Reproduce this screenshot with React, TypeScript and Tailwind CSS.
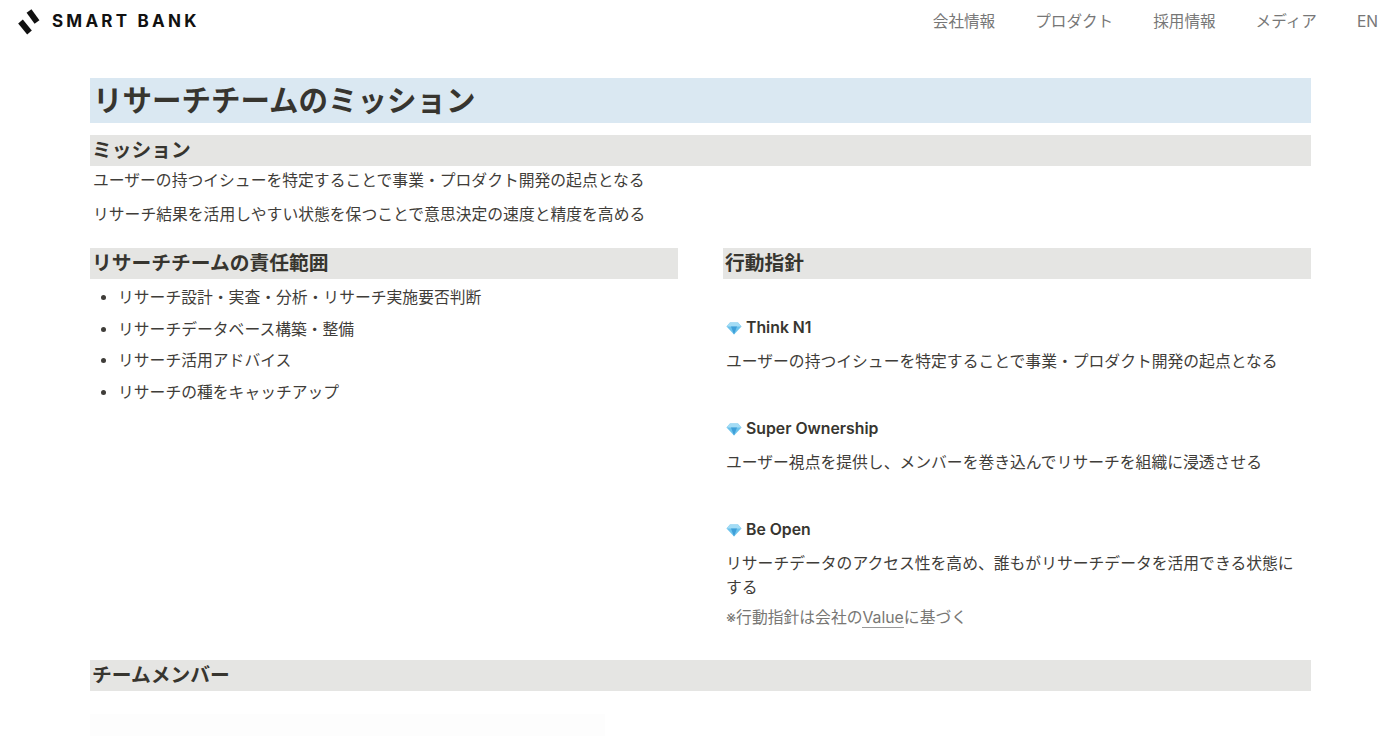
import React from 'react';

const jp = { fontFamily: '"Inter", "Noto Sans CJK JP", sans-serif' };

const Gem = () => (
  <svg width="16" height="13" viewBox="0 0 16 13" className="shrink-0">
    <path d="M0.5 4.5 L4 0.5 H12 L15.5 4.5 L8 12.5 Z" fill="#6cc3ec" />
    <path d="M4 0.5 H12 L15.5 4.5 H0.5 Z" fill="#a3dcf5" />
    <path d="M5 4.5 L8 12.5 L11 4.5 Z" fill="#3f9fd8" />
  </svg>
);

const Logo = () => (
  <svg width="22" height="26" viewBox="0 0 22 26">
    <path d="M2.5 12.5 L11.5 23.5" stroke="#111" strokeWidth="6" fill="none" />
    <path d="M11 2 L19 13" stroke="#111" strokeWidth="6" fill="none" />
  </svg>
);

const Heading = ({ children }: { children: React.ReactNode }) => (
  <div className="h-[31px] bg-[#e5e5e3] pl-[2px] flex items-center text-[19.75px] font-bold text-[#37352f]">{children}</div>
);

const Value = ({ title, children }: { title: string; children: React.ReactNode }) => (
  <div>
    <div className="flex items-center gap-1 h-6 pl-[3px] text-[15.8px] font-semibold text-[#37352f]"><Gem />{title}</div>
    <p className="mt-[10px] pl-[3px] pr-[4px] text-[15.8px] leading-6 text-[#3f3d39]">{children}</p>
  </div>
);

export default function App() {
  return (
    <div className="h-[736px] overflow-hidden bg-white" style={jp}>
      <header className="h-[44px] flex items-center justify-between pl-[18px] pr-[22px]">
        <div className="flex items-center gap-[12px]">
          <Logo />
          <span className="text-[17px] font-bold tracking-[0.19em] text-[#111]">SMART BANK</span>
        </div>
        <nav className="flex items-center gap-[40px] text-[15.6px] text-[#777]">
          <span>会社情報</span><span>プロダクト</span><span>採用情報</span><span>メディア</span><span>EN</span>
        </nav>
      </header>
      <main className="pl-[90px] pr-[89px] pt-[34px] text-[#3f3d39]">
        <h1 className="h-[45px] bg-[#dae8f2] pl-[3px] flex items-center text-[29.5px] font-bold text-[#37352f]">リサーチチームのミッション</h1>
        <div className="mt-3"><Heading>ミッション</Heading></div>
        <p className="pl-[3px] mt-[3px] text-[15.8px] leading-6">ユーザーの持つイシューを特定することで事業・プロダクト開発の起点となる</p>
        <p className="pl-[3px] mt-[10px] text-[15.8px] leading-6">リサーチ結果を活用しやすい状態を保つことで意思決定の速度と精度を高める</p>
        <div className="mt-[21px] grid grid-cols-2 gap-[45px]">
          <section>
            <Heading>リサーチチームの責任範囲</Heading>
            <ul className="mt-[7px] pl-[28px] list-disc text-[15.8px] leading-6 space-y-[7.5px]">
              <li>リサーチ設計・実査・分析・リサーチ実施要否判断</li>
              <li>リサーチデータベース構築・整備</li>
              <li>リサーチ活用アドバイス</li>
              <li>リサーチの種をキャッチアップ</li>
            </ul>
          </section>
          <section>
            <Heading>行動指針</Heading>
            <div className="mt-[37px] flex flex-col gap-[43px]">
              <Value title="Think N1">ユーザーの持つイシューを特定することで事業・プロダクト開発の起点となる</Value>
              <Value title="Super Ownership">ユーザー視点を提供し、メンバーを巻き込んでリサーチを組織に浸透させる</Value>
              <Value title="Be Open">リサーチデータのアクセス性を高め、誰もがリサーチデータを活用できる状態にする</Value>
            </div>
            <p className="pl-[3px] mt-[6px] text-[15.8px] leading-6 text-[#787774]">※行動指針は会社の<span className="border-b border-[#999]">Value</span>に基づく</p>
          </section>
        </div>
        <div className="mt-[30px]"><Heading>チームメンバー</Heading></div>
        <div className="mt-[23px] h-[40px] w-[515px] bg-[#fdfdfd]" />
      </main>
    </div>
  );
}
